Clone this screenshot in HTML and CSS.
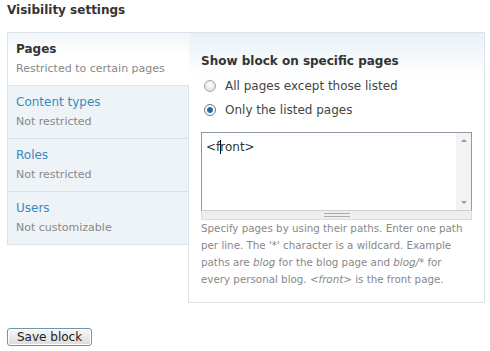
FILE: index.html
```html
<!DOCTYPE html>
<html lang="en">
<head>
  <meta charset="UTF-8" />
  <title>Visibility settings</title>
  <link rel="stylesheet" href="styles.css">
</head>
<body>

<h2 class="section-title">Visibility settings</h2>

<div class="vtabs">
  <ul class="vtabs-menu">
    <li class="vtab selected">
      <strong class="vtab-title">Pages</strong>
      <span class="vtab-summary">Restricted to certain pages</span>
    </li>
    <li class="vtab">
      <a class="vtab-title" href="#">Content types</a>
      <span class="vtab-summary">Not restricted</span>
    </li>
    <li class="vtab">
      <a class="vtab-title" href="#">Roles</a>
      <span class="vtab-summary">Not restricted</span>
    </li>
    <li class="vtab">
      <a class="vtab-title" href="#">Users</a>
      <span class="vtab-summary">Not customizable</span>
    </li>
  </ul>

  <div class="vtabs-pane">
    <div class="form-title">Show block on specific pages</div>
    <div class="radio">
      <span class="radio-dot"></span>
      <span>All pages except those listed</span>
    </div>
    <div class="radio">
      <span class="radio-dot checked"></span>
      <span>Only the listed pages</span>
    </div>

    <div class="textarea-wrap">
      <div class="textarea">
        <div class="textarea-text">&lt;f<span class="caret"></span>ront&gt;</div>
        <div class="scrollbar">
          <span class="arrow up"></span>
          <span class="arrow down"></span>
        </div>
      </div>
      <div class="grip"><span></span></div>
    </div>

    <div class="description">
      Specify pages by using their paths. Enter one path per line. The '*' character is a wildcard. Example paths are <em>blog</em> for the blog page and <em>blog/*</em> for every personal blog. &lt;<em>front</em>&gt; is the front page.
    </div>
  </div>
</div>

<button class="save-btn">Save block</button>

</body>
</html>
```

FILE: styles.css
```css
body {
  margin: 0;
  padding: 3px 7px;
  font-family: 'DejaVu Sans', Verdana, sans-serif;
  font-size: 11px;
  color: #333;
  background: #fff;
}

.section-title {
  margin: 0 0 14px;
  font-size: 12px;
  font-weight: bold;
  color: #333;
  line-height: 15px;
}

.vtabs {
  display: flex;
  align-items: flex-start;
  width: 478px;
}

.vtabs-menu {
  list-style: none;
  margin: 0;
  padding: 0;
  width: 181px;
  border-top: 1px solid #dbe3ea;
  border-left: 1px solid #dbe3ea;
  border-bottom: 1px solid #dbe3ea;
  position: relative;
  z-index: 1;
}

.vtab {
  height: 53px;
  border-bottom: 1px solid #dbe3ea;
  background: #eef3f8;
  padding: 8px 0 0 8px;
  box-sizing: border-box;
}

.vtab:last-child {
  border-bottom: none;
  height: 52px;
}

.vtab.selected {
  background: linear-gradient(#f0f5fa, #fff 40%);
  margin-right: -1px;
}

.vtab-title {
  display: block;
  font-size: 12px;
  line-height: 17px;
  color: #3a8abb;
  text-decoration: none;
}

strong.vtab-title {
  color: #333;
}

.vtab-summary {
  display: block;
  margin-top: 3px;
  font-size: 11px;
  line-height: 15px;
  color: #888;
}

.vtabs-pane {
  flex: 1;
  border: 1px solid #dbe3ea;
  background: linear-gradient(#e9f1f8, #fff 45px);
  padding: 20px 12px 14px 12px;
}

.form-title {
  font-size: 12px;
  font-weight: bold;
  line-height: 16px;
  color: #333;
  margin-bottom: 5px;
}

.radio {
  display: flex;
  align-items: center;
  gap: 9px;
  height: 24px;
  font-size: 12px;
  color: #444;
  padding-left: 3px;
}

.radio-dot {
  width: 10px;
  height: 10px;
  border-radius: 50%;
  border: 1px solid #a7a7a7;
  background: radial-gradient(circle at 50% 40%, #fff, #d6d6d6);
}

.radio-dot.checked {
  border-color: #5f7f96;
  background: radial-gradient(circle, #1f5f8a 0, #2e74a3 2.5px, #fff 3.5px, #e2e7ec);
}

.textarea-wrap {
  margin-top: 10px;
  width: 271px;
}

.textarea {
  display: flex;
  height: 77px;
  border: 1px solid #8d9aa5;
  border-bottom-color: #c9d0d6;
  background: #fff;
}

.textarea-text {
  flex: 1;
  padding: 7px 4px;
  font-size: 12px;
  line-height: 15px;
  color: #333;
}

.caret {
  display: inline-block;
  width: 1px;
  height: 14px;
  background: #000;
  vertical-align: -3px;
  margin: 0 -1px 0 0;
}

.scrollbar {
  width: 15px;
  background: #f3f3f3;
  display: flex;
  flex-direction: column;
  justify-content: space-between;
  align-items: center;
  padding: 6px 0;
}

.arrow {
  width: 0;
  height: 0;
  border-left: 3px solid transparent;
  border-right: 3px solid transparent;
}

.arrow.up {
  border-bottom: 3px solid #999;
}

.arrow.down {
  border-top: 3px solid #999;
}

.grip {
  height: 8px;
  border: 1px solid #dcdcdc;
  border-top: none;
  background: #eee;
  display: flex;
  justify-content: center;
  align-items: center;
}

.grip span {
  width: 26px;
  height: 2px;
  border-top: 1px solid #aaa;
  border-bottom: 1px solid #aaa;
}

.description {
  margin-top: 0;
  font-size: 10.3px;
  line-height: 17px;
  color: #888;
  width: 268px;
}

.save-btn {
  display: block;
  margin-top: 25px;
  font-family: 'DejaVu Sans', Verdana, sans-serif;
  font-size: 12px;
  line-height: 14px;
  color: #222;
  padding: 1px 9px;
  border: 1px solid #6f95ae;
  border-radius: 3px;
  background: linear-gradient(#f7f7f7, #dcdcdc);
  box-shadow: inset 0 0 0 1px #fff;
}
```
